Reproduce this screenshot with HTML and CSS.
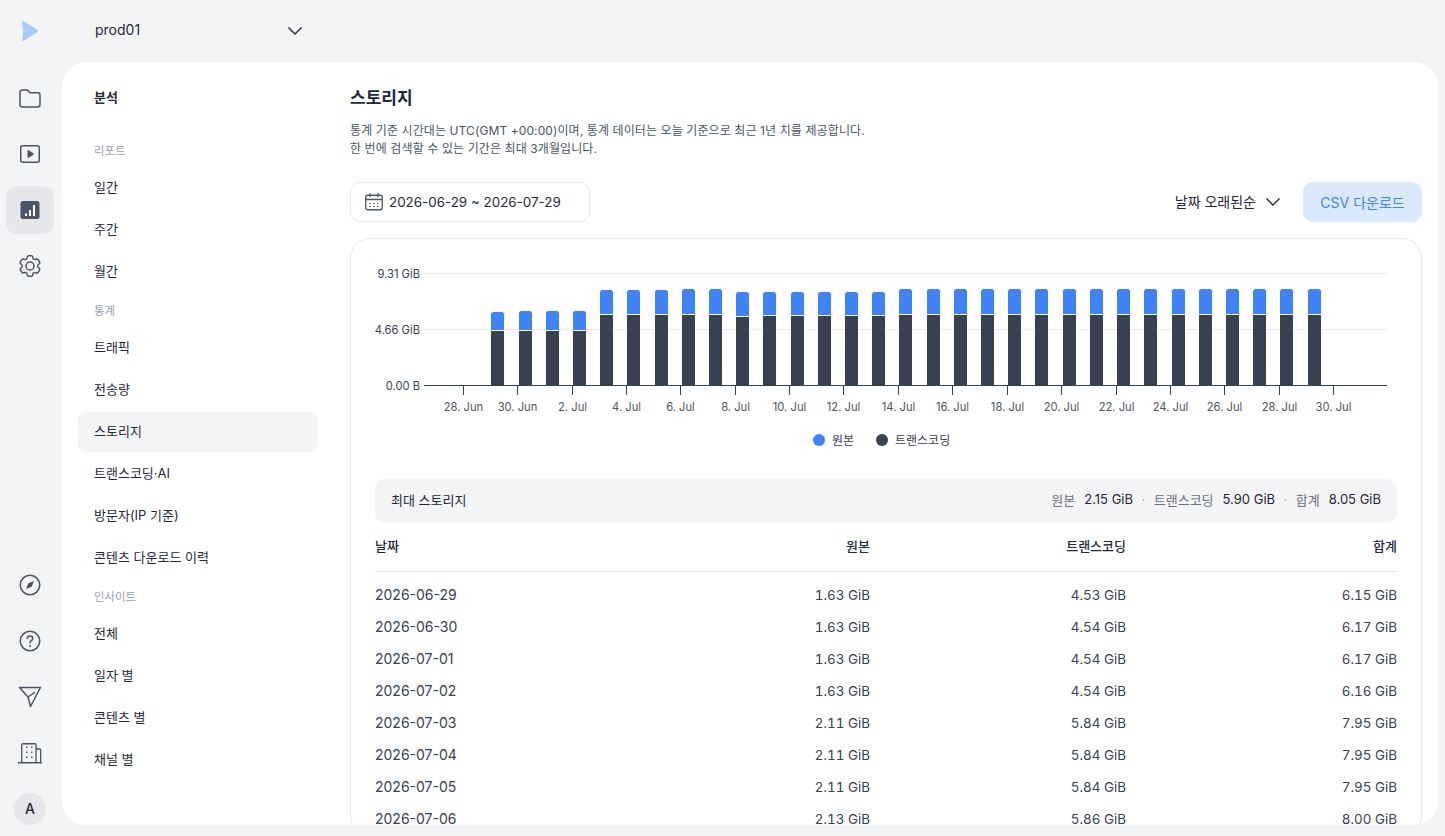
FILE: index.html
```html
<!DOCTYPE html>
<html lang="ko">
<head>
    <meta charset="UTF-8" />
    <title>스토리지</title>
    <link rel="stylesheet" href="styles.css">
</head>
<body>
<div class="app">
    <!-- 왼쪽 아이콘 메뉴 -->
    <aside class="rail">
        <div class="logo">
            <svg width="18" height="22" viewBox="0 0 18 22"><path d="M2.400 1.200 16.200 9.600c1 .7 1 2 0 2.700L2.400 20.800c-.8.500-1.400.100-1.300-.800L2.200 11 1.100 2c-.1-.9.500-1.300 1.300-.8Z" fill="#a8c9fb"/></svg>
        </div>
        <div class="rail-group">
            <a class="rail-btn" href="#">
                <svg width="24" height="24" viewBox="0 0 24 24"><path d="M2 6.500C2 5.100 3 4 4.400 4h4.300c.6 0 1.100.2 1.500.7l1.300 1.500c.3.400.8.600 1.300.6h7c1.300 0 2.200 1 2.200 2.200v9.500c0 1.400-1 2.500-2.400 2.500H4.400C3 21 2 19.900 2 18.500Z" fill="none" stroke="#4b5563" stroke-width="1.500"/></svg>
            </a>
            <a class="rail-btn" href="#">
                <svg width="24" height="24" viewBox="0 0 24 24"><rect x="2.750" y="3.750" width="18.500" height="16.500" rx="2" fill="none" stroke="#4b5563" stroke-width="1.500"/><path d="M9.500 8.400v7.200c0 .4.400.6.700.4l5.500-3.600c.3-.2.300-.6 0-.8l-5.500-3.600c-.3-.2-.7 0-.7.400Z" fill="#4b5563"/></svg>
            </a>
            <a class="rail-btn active" href="#">
                <svg width="24" height="24" viewBox="0 0 24 24"><rect x="2.500" y="3" width="19" height="18" rx="2.500" fill="#4b5563"/><rect x="7" y="15.500" width="2" height="2.500" fill="#fff"/><rect x="11" y="12" width="2" height="6" fill="#fff"/><rect x="15" y="7" width="2" height="11" fill="#fff"/></svg>
            </a>
            <a class="rail-btn" href="#">
                <svg width="24" height="24" viewBox="1.500 1.500 21 21"><path d="M9.594 3.940c.09-.542.56-.94 1.110-.94h2.593c.55 0 1.020.398 1.110.94l.213 1.281c.063.374.313.686.645.870.074.040.147.083.22.127.325.196.72.257 1.075.124l1.217-.456a1.125 1.125 0 0 1 1.370.490l1.296 2.247a1.125 1.125 0 0 1-.26 1.431l-1.003.827c-.293.241-.438.613-.43.992a7.723 7.723 0 0 1 0 .255c-.008.378.137.75.43.991l1.004.827c.424.35.534.955.26 1.430l-1.298 2.247a1.125 1.125 0 0 1-1.369.491l-1.217-.456c-.355-.133-.75-.072-1.076.124a6.470 6.470 0 0 1-.22.128c-.331.183-.581.495-.644.869l-.213 1.281c-.09.543-.56.94-1.110.94h-2.594c-.55 0-1.019-.398-1.110-.94l-.213-1.281c-.062-.374-.312-.686-.644-.87a6.520 6.520 0 0 1-.22-.127c-.325-.196-.72-.257-1.076-.124l-1.217.456a1.125 1.125 0 0 1-1.369-.49l-1.297-2.247a1.125 1.125 0 0 1 .26-1.431l1.004-.827c.292-.24.437-.613.43-.991a6.932 6.932 0 0 1 0-.255c.007-.38-.138-.751-.43-.992l-1.004-.827a1.125 1.125 0 0 1-.26-1.430l1.297-2.247a1.125 1.125 0 0 1 1.370-.491l1.216.456c.356.133.751.072 1.076-.124.072-.044.146-.086.22-.128.332-.183.582-.495.644-.869l.214-1.280Z" fill="none" stroke="#4b5563" stroke-width="1.300" stroke-linejoin="round"/><circle cx="12" cy="12" r="3.500" fill="none" stroke="#4b5563" stroke-width="1.300"/></svg>
            </a>
        </div>
        <div class="rail-group rail-bottom">
            <a class="rail-btn" href="#">
                <svg width="24" height="24" viewBox="0 0 24 24"><circle cx="12" cy="12" r="9.750" fill="none" stroke="#4b5563" stroke-width="1.500"/><path d="M16 8 13.700 13.700 8 16 10.300 10.300Z" fill="#4b5563"/></svg>
            </a>
            <a class="rail-btn" href="#">
                <svg width="24" height="24" viewBox="0 0 24 24"><circle cx="12" cy="12" r="9.750" fill="none" stroke="#4b5563" stroke-width="1.500"/><path d="M9.200 9.500c0-1.600 1.300-2.600 2.800-2.600s2.800 1 2.800 2.500c0 2.200-2.800 2.200-2.800 4.300" fill="none" stroke="#4b5563" stroke-width="1.500" stroke-linecap="round"/><circle cx="12" cy="17" r="1" fill="#4b5563"/></svg>
            </a>
            <a class="rail-btn" href="#">
                <svg width="24" height="24" viewBox="0 0 24 24"><path d="M1.500 2.500H22.500L12.500 21.500 10 12ZM10 12 16.500 7.500" fill="none" stroke="#4b5563" stroke-width="1.500" stroke-linejoin="round" stroke-linecap="round"/></svg>
            </a>
            <a class="rail-btn" href="#">
                <svg width="24" height="24" viewBox="0 0 24 24"><path d="M0 21.750h24M3.750 21.750V4c0-.7.500-1.250 1.200-1.250h11.800c.7 0 1.250.550 1.250 1.250v17.750M18 8h3.500c.6 0 1.150.500 1.150 1.150v12.600" fill="none" stroke="#4b5563" stroke-width="1.300"/><path d="M8 6.300h1.500M13 6.300h1.500M8 11.300h1.500M13 11.300h1.500M8 16.300h1.500M13 16.300h1.500" stroke="#4b5563" stroke-width="1.500"/></svg>
            </a>
            <div class="avatar">A</div>
        </div>
    </aside>

    <div class="right">
        <div class="topbar">
            <span class="project">prod01</span>
            <svg class="chev" width="16" height="10" viewBox="0 0 16 10"><path d="M1.500 1.500 8 8l6.500-6.500" fill="none" stroke="#1f2937" stroke-width="1.400"/></svg>
        </div>

        <div class="panel">
            <nav class="side">
                <h2 class="side-title">분석</h2>
                <p class="side-label">리포트</p>
                <a class="side-item" href="#">일간</a>
                <a class="side-item" href="#">주간</a>
                <a class="side-item" href="#">월간</a>
                <p class="side-label">통계</p>
                <a class="side-item" href="#">트래픽</a>
                <a class="side-item" href="#">전송량</a>
                <a class="side-item on" href="#">스토리지</a>
                <a class="side-item" href="#">트랜스코딩·AI</a>
                <a class="side-item" href="#">방문자(IP 기준)</a>
                <a class="side-item" href="#">콘텐츠 다운로드 이력</a>
                <p class="side-label">인사이트</p>
                <a class="side-item" href="#">전체</a>
                <a class="side-item" href="#">일자 별</a>
                <a class="side-item" href="#">콘텐츠 별</a>
                <a class="side-item" href="#">채널 별</a>
            </nav>

            <main class="content">
                <h1 class="title">스토리지</h1>
                <p class="desc">통계 기준 시간대는 UTC(GMT +00:00)이며, 통계 데이터는 오늘 기준으로 최근 1년 치를 제공합니다.<br>한 번에 검색할 수 있는 기간은 최대 3개월입니다.</p>

                <div class="tools">
                    <div class="date-box">
                        <svg width="20" height="20" viewBox="0 0 20 20"><rect x="1.750" y="3.250" width="16.500" height="14.500" rx="2" fill="none" stroke="#4b5563" stroke-width="1.300"/><path d="M1.750 7.500h16.500M6 1v4M14 1v4" fill="none" stroke="#4b5563" stroke-width="1.300"/><path d="M5.500 11.500h1.500M9.250 11.500h1.500M13 11.500h1.500M5.500 14.500h1.500M9.250 14.500h1.500M13 14.500h1.500" stroke="#4b5563" stroke-width="1.200"/></svg>
                        <span>2026-06-29 ~ 2026-07-29</span>
                    </div>
                    <div class="tools-right">
                        <div class="sort">
                            <span>날짜 오래된순</span>
                            <svg width="16" height="10" viewBox="0 0 16 10"><path d="M1.500 1.500 8 8l6.500-6.500" fill="none" stroke="#1f2937" stroke-width="1.400"/></svg>
                        </div>
                        <button class="csv">CSV 다운로드</button>
                    </div>
                </div>

                <section class="card">
                    <svg class="chart" width="1070" height="228" viewBox="351 239 1070 228">
                        <g class="grid">
                            <path d="M424 273.500H1387M424 329.500H1387"/>
                        </g>
                        <g class="ylabels">
                            <text x="420" y="278">9.31 GiB</text>
                            <text x="420" y="334">4.66 GiB</text>
                            <text x="420" y="390">0.00 B</text>
                        </g>
                        <g class="orig">
                            <rect x="490.500" y="311.500" width="14" height="24" rx="3"/>
                            <rect x="518.500" y="310.500" width="14" height="25" rx="3"/>
                            <rect x="545.500" y="310.500" width="14" height="25" rx="3"/>
                            <rect x="572.500" y="310.500" width="14" height="25" rx="3"/>
                            <rect x="599.500" y="289.500" width="14" height="30" rx="3"/>
                            <rect x="626.500" y="289.500" width="14" height="30" rx="3"/>
                            <rect x="654.500" y="289.500" width="14" height="30" rx="3"/>
                            <rect x="681.500" y="288.500" width="14" height="30" rx="3"/>
                            <rect x="708.500" y="288.500" width="14" height="30" rx="3"/>
                            <rect x="735.500" y="291.500" width="14" height="30" rx="3"/>
                            <rect x="762.500" y="291.500" width="14" height="30" rx="3"/>
                            <rect x="790.500" y="291.500" width="14" height="30" rx="3"/>
                            <rect x="817.500" y="291.500" width="14" height="30" rx="3"/>
                            <rect x="844.500" y="291.500" width="14" height="30" rx="3"/>
                            <rect x="871.500" y="291.500" width="14" height="30" rx="3"/>
                            <rect x="898.500" y="288.500" width="14" height="30" rx="3"/>
                            <rect x="926.500" y="288.500" width="14" height="30" rx="3"/>
                            <rect x="953.500" y="288.500" width="14" height="30" rx="3"/>
                            <rect x="980.500" y="288.500" width="14" height="30" rx="3"/>
                            <rect x="1007.500" y="288.500" width="14" height="30" rx="3"/>
                            <rect x="1034.500" y="288.500" width="14" height="30" rx="3"/>
                            <rect x="1062.500" y="288.500" width="14" height="30" rx="3"/>
                            <rect x="1089.500" y="288.500" width="14" height="30" rx="3"/>
                            <rect x="1116.500" y="288.500" width="14" height="30" rx="3"/>
                            <rect x="1143.500" y="288.500" width="14" height="30" rx="3"/>
                            <rect x="1171.500" y="288.500" width="14" height="30" rx="3"/>
                            <rect x="1198.500" y="288.500" width="14" height="30" rx="3"/>
                            <rect x="1225.500" y="288.500" width="14" height="30" rx="3"/>
                            <rect x="1252.500" y="288.500" width="14" height="30" rx="3"/>
                            <rect x="1279.500" y="288.500" width="14" height="30" rx="3"/>
                            <rect x="1307.500" y="288.500" width="14" height="30" rx="3"/>
                        </g>
                        <g class="trans">
                            <rect x="490.500" y="330.500" width="14" height="55"/>
                            <rect x="518.500" y="330.500" width="14" height="55"/>
                            <rect x="545.500" y="330.500" width="14" height="55"/>
                            <rect x="572.500" y="330.500" width="14" height="55"/>
                            <rect x="599.500" y="314.500" width="14" height="71"/>
                            <rect x="626.500" y="314.500" width="14" height="71"/>
                            <rect x="654.500" y="314.500" width="14" height="71"/>
                            <rect x="681.500" y="314.500" width="14" height="71"/>
                            <rect x="708.500" y="314.500" width="14" height="71"/>
                            <rect x="735.500" y="316.500" width="14" height="69"/>
                            <rect x="762.500" y="315.500" width="14" height="70"/>
                            <rect x="790.500" y="315.500" width="14" height="70"/>
                            <rect x="817.500" y="315.500" width="14" height="70"/>
                            <rect x="844.500" y="315.500" width="14" height="70"/>
                            <rect x="871.500" y="315.500" width="14" height="70"/>
                            <rect x="898.500" y="314.500" width="14" height="71"/>
                            <rect x="926.500" y="314.500" width="14" height="71"/>
                            <rect x="953.500" y="314.500" width="14" height="71"/>
                            <rect x="980.500" y="314.500" width="14" height="71"/>
                            <rect x="1007.500" y="314.500" width="14" height="71"/>
                            <rect x="1034.500" y="314.500" width="14" height="71"/>
                            <rect x="1062.500" y="314.500" width="14" height="71"/>
                            <rect x="1089.500" y="314.500" width="14" height="71"/>
                            <rect x="1116.500" y="314.500" width="14" height="71"/>
                            <rect x="1143.500" y="314.500" width="14" height="71"/>
                            <rect x="1171.500" y="314.500" width="14" height="71"/>
                            <rect x="1198.500" y="314.500" width="14" height="71"/>
                            <rect x="1225.500" y="314.500" width="14" height="71"/>
                            <rect x="1252.500" y="314.500" width="14" height="71"/>
                            <rect x="1279.500" y="314.500" width="14" height="71"/>
                            <rect x="1307.500" y="314.500" width="14" height="71"/>
                        </g>
                        <path class="axis" d="M424 385.500H1387M463.500 385v10M517.500 385v10M572.500 385v10M626.500 385v10M680.500 385v10M735.500 385v10M789.500 385v10M843.500 385v10M898.500 385v10M952.500 385v10M1007.500 385v10M1061.500 385v10M1116.500 385v10M1170.500 385v10M1224.500 385v10M1279.500 385v10M1333.500 385v10"/>
                        <g class="xlabels">
                            <text x="463.500" y="411">28. Jun</text>
                            <text x="517.500" y="411">30. Jun</text>
                            <text x="572.500" y="411">2. Jul</text>
                            <text x="626.500" y="411">4. Jul</text>
                            <text x="680.500" y="411">6. Jul</text>
                            <text x="735.500" y="411">8. Jul</text>
                            <text x="789.500" y="411">10. Jul</text>
                            <text x="843.500" y="411">12. Jul</text>
                            <text x="898.500" y="411">14. Jul</text>
                            <text x="952.500" y="411">16. Jul</text>
                            <text x="1007.500" y="411">18. Jul</text>
                            <text x="1061.500" y="411">20. Jul</text>
                            <text x="1116.500" y="411">22. Jul</text>
                            <text x="1170.500" y="411">24. Jul</text>
                            <text x="1224.500" y="411">26. Jul</text>
                            <text x="1279.500" y="411">28. Jul</text>
                            <text x="1333.500" y="411">30. Jul</text>
                        </g>
                        <circle cx="819" cy="440" r="6" fill="#3f83f8"/>
                        <text class="legend" x="832" y="445">원본</text>
                        <circle cx="882" cy="440" r="6" fill="#374151"/>
                        <text class="legend" x="895" y="445">트랜스코딩</text>
                    </svg>

                    <div class="max-bar">
                        <span class="max-name">최대 스토리지</span>
                        <div class="max-vals">
                            <span class="max-key">원본</span><b>2.15 GiB</b><i>·</i>
                            <span class="max-key">트랜스코딩</span><b>5.90 GiB</b><i>·</i>
                            <span class="max-key">합계</span><b>8.05 GiB</b>
                        </div>
                    </div>

                    <table class="tbl">
                        <colgroup><col class="c1"><col class="c2"><col class="c3"><col class="c4"></colgroup>
                        <thead>
                            <tr><th>날짜</th><th>원본</th><th>트랜스코딩</th><th>합계</th></tr>
                        </thead>
                        <tbody>
                            <tr><td>2026-06-29</td><td>1.63 GiB</td><td>4.53 GiB</td><td>6.15 GiB</td></tr>
                            <tr><td>2026-06-30</td><td>1.63 GiB</td><td>4.54 GiB</td><td>6.17 GiB</td></tr>
                            <tr><td>2026-07-01</td><td>1.63 GiB</td><td>4.54 GiB</td><td>6.17 GiB</td></tr>
                            <tr><td>2026-07-02</td><td>1.63 GiB</td><td>4.54 GiB</td><td>6.16 GiB</td></tr>
                            <tr><td>2026-07-03</td><td>2.11 GiB</td><td>5.84 GiB</td><td>7.95 GiB</td></tr>
                            <tr><td>2026-07-04</td><td>2.11 GiB</td><td>5.84 GiB</td><td>7.95 GiB</td></tr>
                            <tr><td>2026-07-05</td><td>2.11 GiB</td><td>5.84 GiB</td><td>7.95 GiB</td></tr>
                            <tr><td>2026-07-06</td><td>2.13 GiB</td><td>5.86 GiB</td><td>8.00 GiB</td></tr>
                        </tbody>
                    </table>
                </section>
            </main>
        </div>
    </div>
</div>
</body>
</html>
```

FILE: styles.css
```css
* {
    margin: 0;
    padding: 0;
    box-sizing: border-box;
}

html, body {
    height: 100%;
    overflow: hidden;
}

body {
    background-color: #f3f4f6;
    color: #1f2937;
    font-family: Inter, "Noto Sans CJK KR", sans-serif;
    font-size: 13px;
}

a {
    color: inherit;
    text-decoration: none;
}

.app {
    display: flex;
    height: 836px;
}

/* left icon rail */
.rail {
    width: 60px;
    flex: none;
    display: flex;
    flex-direction: column;
    align-items: center;
}

.logo {
    height: 62px;
    display: flex;
    align-items: center;
    justify-content: center;
}

.rail-group {
    display: flex;
    flex-direction: column;
    align-items: center;
    gap: 8px;
    padding-top: 12px;
}

.rail-bottom {
    margin-top: auto;
    padding: 0 0 11px;
}

.rail-btn {
    width: 48px;
    height: 48px;
    display: flex;
    align-items: center;
    justify-content: center;
    border-radius: 10px;
}

.rail-btn.active {
    background-color: #e5e7eb;
}

.avatar {
    width: 32px;
    height: 32px;
    margin-top: 8px;
    border-radius: 50%;
    background-color: #e5e7eb;
    font-size: 14px;
    font-weight: 500;
    line-height: 32px;
    text-align: center;
}

.right {
    flex: 1;
    min-width: 0;
    margin-left: 2px;
    padding-right: 7px;
}

.topbar {
    height: 62px;
    display: flex;
    align-items: center;
    width: 241px;
    justify-content: space-between;
    padding-left: 33px;
}

.project {
    margin-bottom: 4px;
    font-size: 14px;
}

.panel {
    height: 763px;
    display: flex;
    overflow: hidden;
    background-color: #fff;
    border-radius: 24px;
}

/* second level menu */
.side {
    width: 272px;
    flex: none;
    padding: 24px 16px 0;
    display: flex;
    flex-direction: column;
}

.side-title {
    height: 22px;
    padding-left: 16px;
    margin-bottom: 33px;
    font-size: 13px;
    font-weight: 700;
    line-height: 22px;
}

.side-label {
    height: 20px;
    padding-left: 16px;
    margin: 7px 0 7px;
    color: #9ca3af;
    font-size: 11.400px;
    line-height: 20px;
}

.side-title + .side-label {
    margin: 0 0 7px;
}

.side-item {
    height: 40px;
    flex: none;
    margin-bottom: 2px;
    padding-left: 16px;
    border-radius: 8px;
    line-height: 38px;
}

.side-item.on {
    background-color: #f3f4f6;
}

/* content column */
.content {
    flex: 1;
    min-width: 0;
    padding: 25px 16px 0;
}

.title {
    font-size: 17px;
    font-weight: 700;
    line-height: 22px;
}

.desc {
    margin-top: 13px;
    color: #4b5563;
    font-size: 12px;
    letter-spacing: .1px;
    line-height: 18px;
}

.tools {
    display: flex;
    justify-content: space-between;
    margin-top: 24px;
}

.date-box {
    width: 240px;
    height: 40px;
    display: flex;
    align-items: center;
    gap: 5px;
    padding-left: 13px;
    border: 1px solid #e5e7eb;
    border-radius: 10px;
    font-size: 13.400px;
}

.tools-right {
    display: flex;
    align-items: center;
    gap: 22px;
}

.sort {
    display: flex;
    align-items: center;
    gap: 9px;
    font-size: 14px;
}

.sort span {
    padding-bottom: 2px;
}

.csv {
    width: 119px;
    height: 40px;
    border: none;
    border-radius: 10px;
    background-color: #dbe9fe;
    color: #3f83f8;
    font: inherit;
    font-size: 14px;
}

.card {
    margin-top: 16px;
    padding: 0 24px;
    border: 1px solid #e5e7eb;
    border-radius: 20px;
}

/* chart */
.chart {
    display: block;
    margin: 0 -24px;
    font-size: 11.200px;
}

.grid path {
    fill: none;
    stroke: #e5e7eb;
}

.orig rect {
    fill: #3f83f8;
    stroke: #fff;
}

.trans rect {
    fill: #374151;
    stroke: #fff;
}

.axis {
    fill: none;
    stroke: #374151;
}

.ylabels text {
    fill: #374151;
    text-anchor: end;
}

.xlabels text {
    fill: #4b5563;
    text-anchor: middle;
}

.legend {
    fill: #374151;
    font-size: 12px;
}

/* max summary */
.max-bar {
    height: 44px;
    margin-top: 12px;
    padding: 0 16px 4px;
    display: flex;
    align-items: center;
    justify-content: space-between;
    border-radius: 10px;
    background-color: #f3f4f6;
}

.max-vals {
    display: flex;
    align-items: center;
}

.max-key {
    color: #6b7280;
    margin-right: 9px;
}

.max-vals b {
    font-weight: 400;
}

.max-vals i {
    margin: 0 8.500px;
    color: #9ca3af;
    font-style: normal;
}

/* table */
.tbl {
    width: 100%;
    border-collapse: collapse;
    table-layout: fixed;
}

.c1 { width: 240px; }
.c2 { width: 255px; }
.c3 { width: 256px; }

.tbl th {
    height: 48px;
    padding-bottom: 3px;
    border-bottom: 1px solid #e5e7eb;
    font-weight: 500;
    text-align: right;
}

.tbl td {
    height: 32px;
    padding-bottom: 1px;
    color: #374151;
    text-align: right;
    font-size: 13.400px;
    font-variant-numeric: tabular-nums;
}

.tbl tbody tr:first-child td {
    padding-top: 8px;
    height: 40px;
}

.tbl th:first-child {
    text-align: left;
}

.tbl td:first-child {
    text-align: left;
    font-size: 14px;
    font-variant-numeric: normal;
}
```
